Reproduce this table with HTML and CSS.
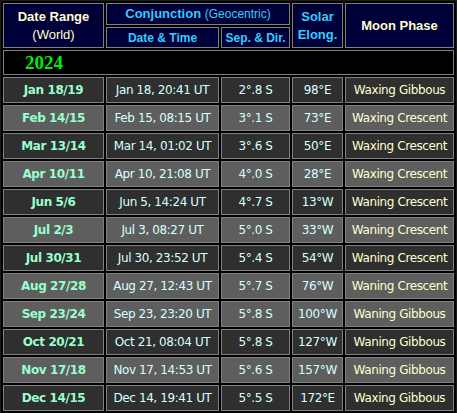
FILE: index.html
```html
<!DOCTYPE html>
<html>
<head>
<meta charset="utf-8">
<link rel="stylesheet" href="styles.css">
</head>
<body>
<table class="conj">
  <colgroup>
    <col class="c-range">
    <col class="c-date">
    <col class="c-sep">
    <col class="c-elong">
    <col class="c-phase">
  </colgroup>
  <thead>
    <tr class="h1">
      <th rowspan="2" class="hd-cream tall">Date Range<br><span class="norm">(World)</span></th>
      <th colspan="2" class="hd-cyan">Conjunction <span class="geo">(Geocentric)</span></th>
      <th rowspan="2" class="hd-cyan tall">Solar<br>Elong.</th>
      <th rowspan="2" class="hd-cream">Moon Phase</th>
    </tr>
    <tr class="h2">
      <th class="hd-cyan small">Date &amp; Time</th>
      <th class="hd-cyan small">Sep. &amp; Dir.</th>
    </tr>
  </thead>
  <tbody>
    <tr class="year"><td colspan="5">2024</td></tr>
    <tr class="row dark"><td class="range">Jan 18/19</td><td>Jan 18, 20:41 UT</td><td>2°.8 S</td><td>98°E</td><td class="phase">Waxing Gibbous</td></tr>
    <tr class="row light"><td class="range">Feb 14/15</td><td>Feb 15, 08:15 UT</td><td>3°.1 S</td><td>73°E</td><td class="phase">Waxing Crescent</td></tr>
    <tr class="row dark"><td class="range">Mar 13/14</td><td>Mar 14, 01:02 UT</td><td>3°.6 S</td><td>50°E</td><td class="phase">Waxing Crescent</td></tr>
    <tr class="row light"><td class="range">Apr 10/11</td><td>Apr 10, 21:08 UT</td><td>4°.0 S</td><td>28°E</td><td class="phase">Waxing Crescent</td></tr>
    <tr class="row dark"><td class="range">Jun 5/6</td><td>Jun 5, 14:24 UT</td><td>4°.7 S</td><td>13°W</td><td class="phase">Waning Crescent</td></tr>
    <tr class="row light"><td class="range">Jul 2/3</td><td>Jul 3, 08:27 UT</td><td>5°.0 S</td><td>33°W</td><td class="phase">Waning Crescent</td></tr>
    <tr class="row dark"><td class="range">Jul 30/31</td><td>Jul 30, 23:52 UT</td><td>5°.4 S</td><td>54°W</td><td class="phase">Waning Crescent</td></tr>
    <tr class="row light"><td class="range">Aug 27/28</td><td>Aug 27, 12:43 UT</td><td>5°.7 S</td><td>76°W</td><td class="phase">Waning Crescent</td></tr>
    <tr class="row light"><td class="range">Sep 23/24</td><td>Sep 23, 23:20 UT</td><td>5°.8 S</td><td>100°W</td><td class="phase">Waning Gibbous</td></tr>
    <tr class="row dark"><td class="range">Oct 20/21</td><td>Oct 21, 08:04 UT</td><td>5°.8 S</td><td>127°W</td><td class="phase">Waning Gibbous</td></tr>
    <tr class="row light"><td class="range">Nov 17/18</td><td>Nov 17, 14:53 UT</td><td>5°.6 S</td><td>157°W</td><td class="phase">Waning Gibbous</td></tr>
    <tr class="row dark"><td class="range">Dec 14/15</td><td>Dec 14, 19:41 UT</td><td>5°.5 S</td><td>172°E</td><td class="phase">Waxing Gibbous</td></tr>
  </tbody>
</table>
</body>
</html>
```

FILE: styles.css
```css
html, body {
  margin: 0;
  padding: 0;
  background: #000;
}

.conj {
  width: 457px;
  table-layout: fixed;
  border-collapse: separate;
  border-spacing: 2px;
  border: 1px solid #1a1a1a;
  background: #000;
}

.c-range { width: 101px; }
.c-date { width: 113px; }
.c-sep { width: 69px; }
.c-elong { width: 51px; }
.c-phase { width: 109px; }

th, td {
  box-sizing: border-box;
  border: 1px solid #808080;
  padding: 0;
  text-align: center;
  vertical-align: middle;
  overflow: hidden;
  white-space: nowrap;
}

th {
  background: #000038;
  font-family: "Liberation Sans", Arial, sans-serif;
  font-weight: bold;
  font-size: 13px;
  line-height: 16px;
}

th.tall { line-height: 18px; }

.h1 th { height: 22px; }
.h2 th { height: 21px; }

.hd-cream { color: #ffffd0; }
.hd-cyan { color: #33ccff; }
.small { font-size: 12px; }
.norm { font-weight: normal; }
.geo { font-weight: normal; font-size: 12px; }

.year td {
  height: 25px;
  background: #000;
  text-align: left;
  padding-left: 21px;
  font-family: "Liberation Serif", "Times New Roman", serif;
  font-weight: bold;
  font-size: 19px;
  color: #00ee00;
}

.row td {
  height: 26px;
  font-family: "DejaVu Sans", Verdana, sans-serif;
  font-size: 12px;
  letter-spacing: -0.4px;
  color: #d8ffff;
}

.dark td { background: #2f2f2f; }
.light td { background: #5e5e5e; }

.row td.range {
  font-weight: bold;
  color: #99ffcc;
}

.row td.phase {
  color: #ffffd0;
}
```
